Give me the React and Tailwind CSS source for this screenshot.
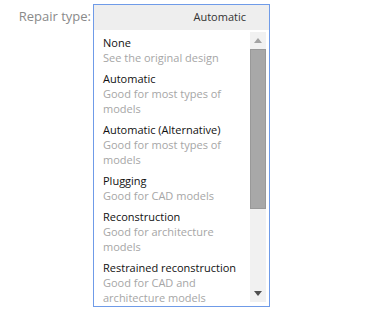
import React from "react";

const items = [
  { t: "None", d: ["See the original design"] },
  { t: "Automatic", d: ["Good for most types of", "models"] },
  { t: "Automatic (Alternative)", d: ["Good for most types of", "models"] },
  { t: "Plugging", d: ["Good for CAD models"] },
  { t: "Reconstruction", d: ["Good for architecture", "models"] },
  { t: "Restrained reconstruction", d: ["Good for CAD and", "architecture models"] },
];

export default function App() {
  return (
    <div
      className="w-[365px] h-[311px] bg-white flex items-start overflow-hidden"
      style={{ fontFamily: '"Open Sans", sans-serif' }}
    >
      <div className="w-[93px] pr-[2px] pt-[6px] text-right text-[13px] leading-[20px] text-[#8a8a8a]">
        Repair type:
      </div>
      <div className="mt-[4px] w-[177px] h-[303px] border border-[#6f9be8] flex flex-col overflow-hidden">
        <div className="h-[25px] shrink-0 bg-[#eeeeee] flex items-center justify-end pr-[23px] text-[11px] text-[#333]">
          Automatic
        </div>
        <div className="flex flex-1 min-h-0">
          <div className="flex-1 min-w-0 pl-[9px] pt-[5px] flex flex-col gap-[6px] overflow-hidden">
            {items.map((it) => (
              <div key={it.t} className="text-[11px] leading-[15px]">
                <div className="text-[#111]">{it.t}</div>
                {it.d.map((l) => (
                  <div key={l} className="text-[#a6a6a6] whitespace-nowrap">{l}</div>
                ))}
              </div>
            ))}
          </div>
          <div className="w-[16px] mt-[2px] mb-[4px] mr-[3px] bg-[#f1f1f1] flex flex-col">
            <div className="h-[17px] flex items-center justify-center">
              <svg width="8" height="5" viewBox="0 0 8 5"><path d="M4 0 L8 5 L0 5 Z" fill="#a3a3a3" /></svg>
            </div>
            <div className="h-[160px] bg-[#a8a8a8] border border-[#999999] mx-[0px]" />
            <div className="flex-1" />
            <div className="h-[17px] flex items-center justify-center">
              <svg width="8" height="5" viewBox="0 0 8 5"><path d="M0 0 L8 0 L4 5 Z" fill="#505050" /></svg>
            </div>
          </div>
        </div>
      </div>
    </div>
  );
}
